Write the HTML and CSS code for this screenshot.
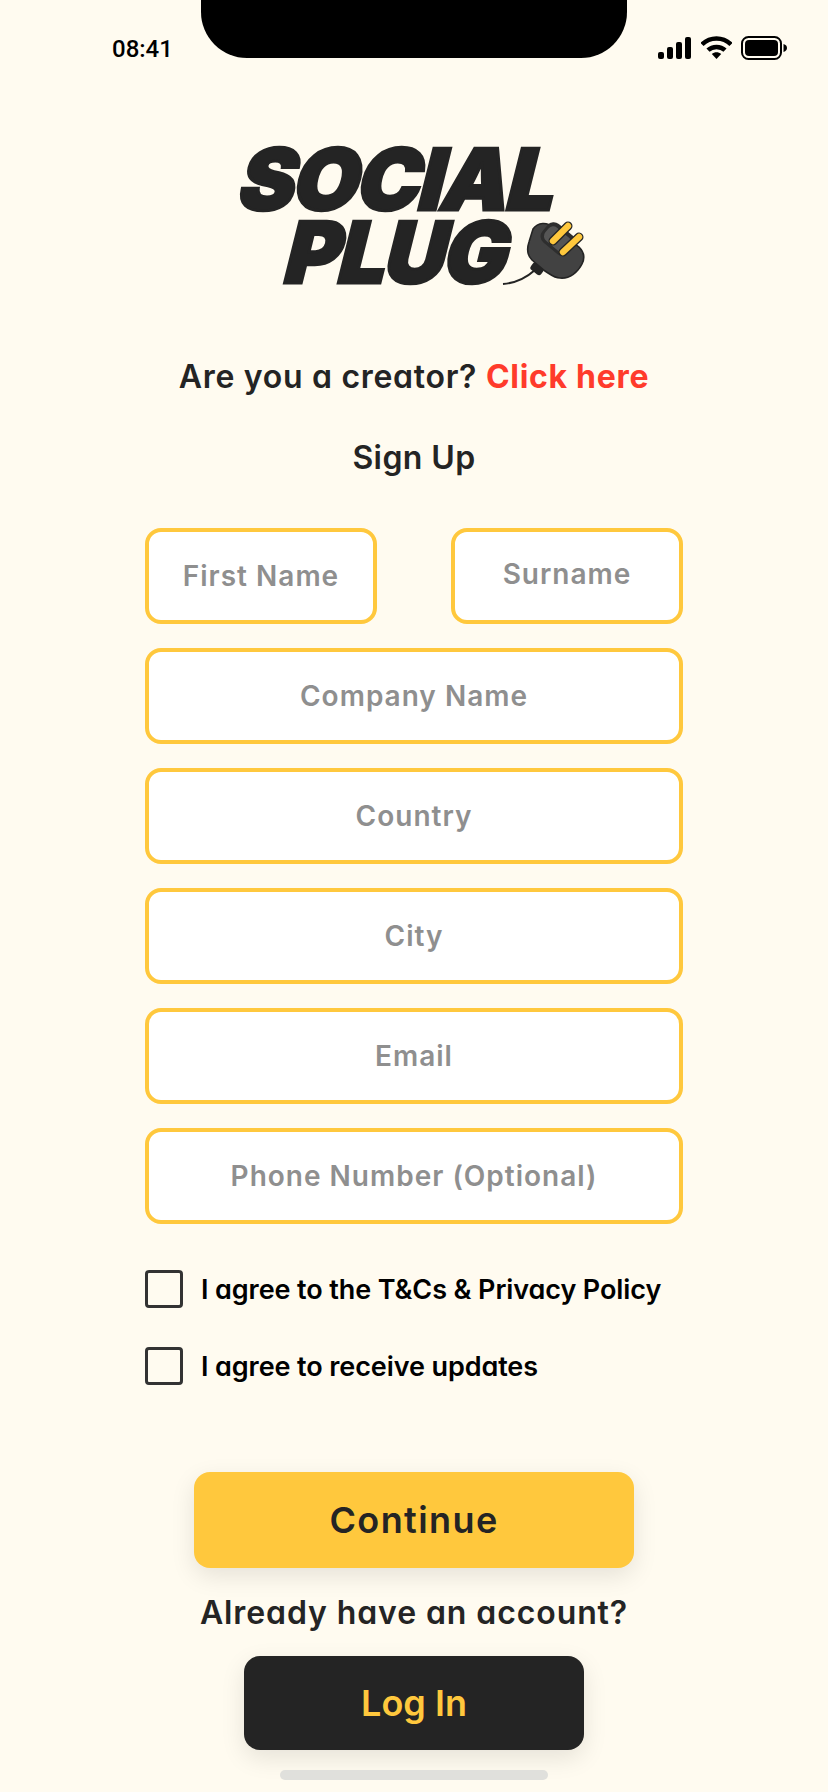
FILE: index.html
```html
<!DOCTYPE html>
<html lang="en">
<head>
    <meta charset="UTF-8">
    <meta name="viewport" content="width=device-width, initial-scale=1.0">
    <title>Social Plug - Sign Up</title>
    <link rel="stylesheet" href="styles.css">
</head>
<body>
    <div class="status-bar">
        <span class="time">08:41</span>
        <div class="notch"></div>
        <div class="status-icons">
            <svg width="34" height="22" viewBox="0 0 34 22">
                <rect x="0" y="15" width="6" height="7" rx="2"/>
                <rect x="9" y="10" width="6" height="12" rx="2"/>
                <rect x="18" y="5" width="6" height="17" rx="2"/>
                <rect x="27" y="0" width="6" height="22" rx="2"/>
            </svg>
            <svg width="31" height="23" viewBox="0 0 31 23">
                <path d="M1 8.5 C9 0.5 22 0.5 30 8.5" fill="none" stroke="#000" stroke-width="4.5"/>
                <path d="M7 14.2 C11.5 9.8 19.5 9.8 24 14.2" fill="none" stroke="#000" stroke-width="4.5"/>
                <path d="M10.8 18 C13.5 15.6 17.5 15.6 20.2 18 L15.5 23 Z"/>
            </svg>
            <svg width="46" height="24" viewBox="0 0 46 24">
                <rect x="1" y="1" width="39" height="22" rx="6.5" fill="none" stroke="#000" stroke-width="2"/>
                <rect x="4" y="4" width="33" height="16" rx="4"/>
                <path d="M42.5 8 C45 8.8 46 10.2 46 12 C46 13.8 45 15.2 42.5 16 Z"/>
            </svg>
        </div>
    </div>

    <div class="page">
        <div class="logo">
            <div class="logo-word logo-top">SOCIAL</div>
            <div class="logo-word logo-bottom">PLUG</div>
            <svg class="logo-plug" width="90" height="80" viewBox="0 0 90 80">
                <path d="M3 74 C16 73 26 68 35 60" fill="none" stroke="#242424" stroke-width="2"/>
                <rect x="31" y="54" width="13" height="9" rx="3" transform="rotate(38 37 58)" fill="#242424"/>
                <path d="M33 19 C38 12 47 12 53 17 L79 37 C84 42 85 48 82 54 C78 62 70 69 60 68 C54 68 50 64 45 61 L32 50 C27 45 27 38 29 32 Z" fill="#424242" stroke="#242424" stroke-width="1.6"/>
                <rect x="41" y="17" width="34" height="24" rx="8" transform="rotate(40 58 29)" fill="#2e2e2e"/>
                <rect x="44" y="21" width="28" height="17" rx="6" transform="rotate(40 58 29)" fill="#555"/>
                <path d="M53 31 L68 16" stroke="#242424" stroke-width="9" stroke-linecap="round"/>
                <path d="M53 31 L68 16" stroke="#ffc83d" stroke-width="6.4" stroke-linecap="round"/>
                <path d="M63 42 L79 27" stroke="#242424" stroke-width="9" stroke-linecap="round"/>
                <path d="M63 42 L79 27" stroke="#ffc83d" stroke-width="6.4" stroke-linecap="round"/>
            </svg>
        </div>

        <p class="creator">Are you a creator? <a href="#">Click here</a></p>
        <h1 class="title">Sign Up</h1>

        <form class="signup">
            <div class="name-row">
                <input class="field" type="text" placeholder="First Name">
                <input class="field field-surname" type="text" placeholder="Surname">
            </div>
            <input class="field" type="text" placeholder="Company Name">
            <input class="field" type="text" placeholder="Country">
            <input class="field" type="text" placeholder="City">
            <input class="field" type="email" placeholder="Email">
            <input class="field" type="tel" placeholder="Phone Number (Optional)">
        </form>

        <div class="agreements">
            <label class="check"><span class="box"></span>I agree to the T&amp;Cs &amp; Privacy Policy</label>
            <label class="check"><span class="box"></span>I agree to receive updates</label>
        </div>

        <button class="btn btn-continue" type="button">Continue</button>
        <p class="already">Already have an account?</p>
        <button class="btn btn-login" type="button">Log In</button>
        <div class="home-bar"></div>
    </div>
</body>
</html>
```

FILE: styles.css
```css
* {
    box-sizing: border-box;
}
body {
    margin: 0;
    width: 828px;
    height: 1792px;
    overflow: hidden;
    background-color: #fffbf0;
    font-family: Inter, "Liberation Sans", sans-serif;
    font-feature-settings: "cv11";
    color: #242424;
}
.status-bar {
    display: grid;
    grid-template-columns: 1fr 426px 1fr;
    grid-template-rows: 58px;
}
.time {
    padding: 37px 0 0 112px;
    font-family: Roboto, sans-serif;
    font-size: 24px;
    font-weight: 500;
    line-height: 25px;
    color: #000;
}
.notch {
    background-color: #000;
    border-radius: 0 0 46px 46px;
}
.status-icons {
    display: flex;
    justify-content: flex-end;
    align-items: center;
    gap: 9px;
    padding: 37px 41px 0 0;
    height: 58px;
}
.page {
    display: flex;
    flex-direction: column;
    align-items: center;
}
.logo {
    position: relative;
    width: 400px;
    height: 146px;
    margin-top: 85px;
}
.logo-word {
    font-size: 85px;
    font-weight: 900;
    line-height: 73px;
    letter-spacing: -2px;
    transform: skewX(-14deg);
    -webkit-text-stroke: 3px #242424;
    white-space: nowrap;
}
.logo-top {
    padding-left: 28px;
}
.logo-bottom {
    padding-left: 74px;
}
.logo-plug {
    position: absolute;
    left: 286px;
    top: 67px;
}
.creator {
    margin: 67px 0 0;
    font-size: 32px;
    font-weight: 600;
    line-height: 42px;
    letter-spacing: 0.7px;
}
.creator a {
    color: #ff3b2b;
    font-weight: 700;
    text-decoration: none;
}
.title {
    margin: 39px 0 0;
    font-size: 32px;
    font-weight: 600;
    line-height: 42px;
    letter-spacing: 0.4px;
}
.signup {
    display: flex;
    flex-direction: column;
    gap: 24px;
    width: 538px;
    margin-top: 49px;
}
.name-row {
    display: flex;
    justify-content: space-between;
}
.name-row .field {
    width: 232px;
}
.field {
    width: 100%;
    height: 96px;
    padding: 0 8px;
    border: 4px solid #ffc83d;
    border-radius: 16px;
    background-color: #fff;
    font-family: inherit;
    font-size: 28px;
    font-weight: 600;
    letter-spacing: 1px;
    text-align: center;
}
.field-surname {
    padding-bottom: 4px;
}
.field::placeholder {
    color: #8f8f8f;
    opacity: 1;
}
.agreements {
    display: flex;
    flex-direction: column;
    gap: 39px;
    width: 538px;
    margin-top: 46px;
}
.check {
    display: flex;
    align-items: center;
    gap: 18px;
    height: 38px;
    font-size: 27px;
    font-weight: 600;
    letter-spacing: -0.1px;
    color: #000;
}
.box {
    width: 38px;
    height: 38px;
    border: 3.5px solid #333;
    border-radius: 4px;
}
.btn {
    border: none;
    border-radius: 16px;
    font-family: inherit;
    font-weight: 600;
    box-shadow: 0 8px 24px rgba(0, 0, 0, 0.1);
}
.btn-continue {
    width: 440px;
    height: 96px;
    margin-top: 87px;
    background-color: #ffc83d;
    color: #242424;
    font-size: 36px;
    letter-spacing: 1.4px;
}
.already {
    margin: 24px 0 0;
    font-size: 32px;
    font-weight: 600;
    line-height: 42px;
    letter-spacing: 0.9px;
}
.btn-login {
    width: 340px;
    height: 94px;
    margin-top: 22px;
    background-color: #242424;
    color: #ffc83d;
    font-size: 36px;
}
.home-bar {
    width: 268px;
    height: 10px;
    margin-top: 20px;
    border-radius: 5px;
    background-color: #e0e0dc;
}
```
